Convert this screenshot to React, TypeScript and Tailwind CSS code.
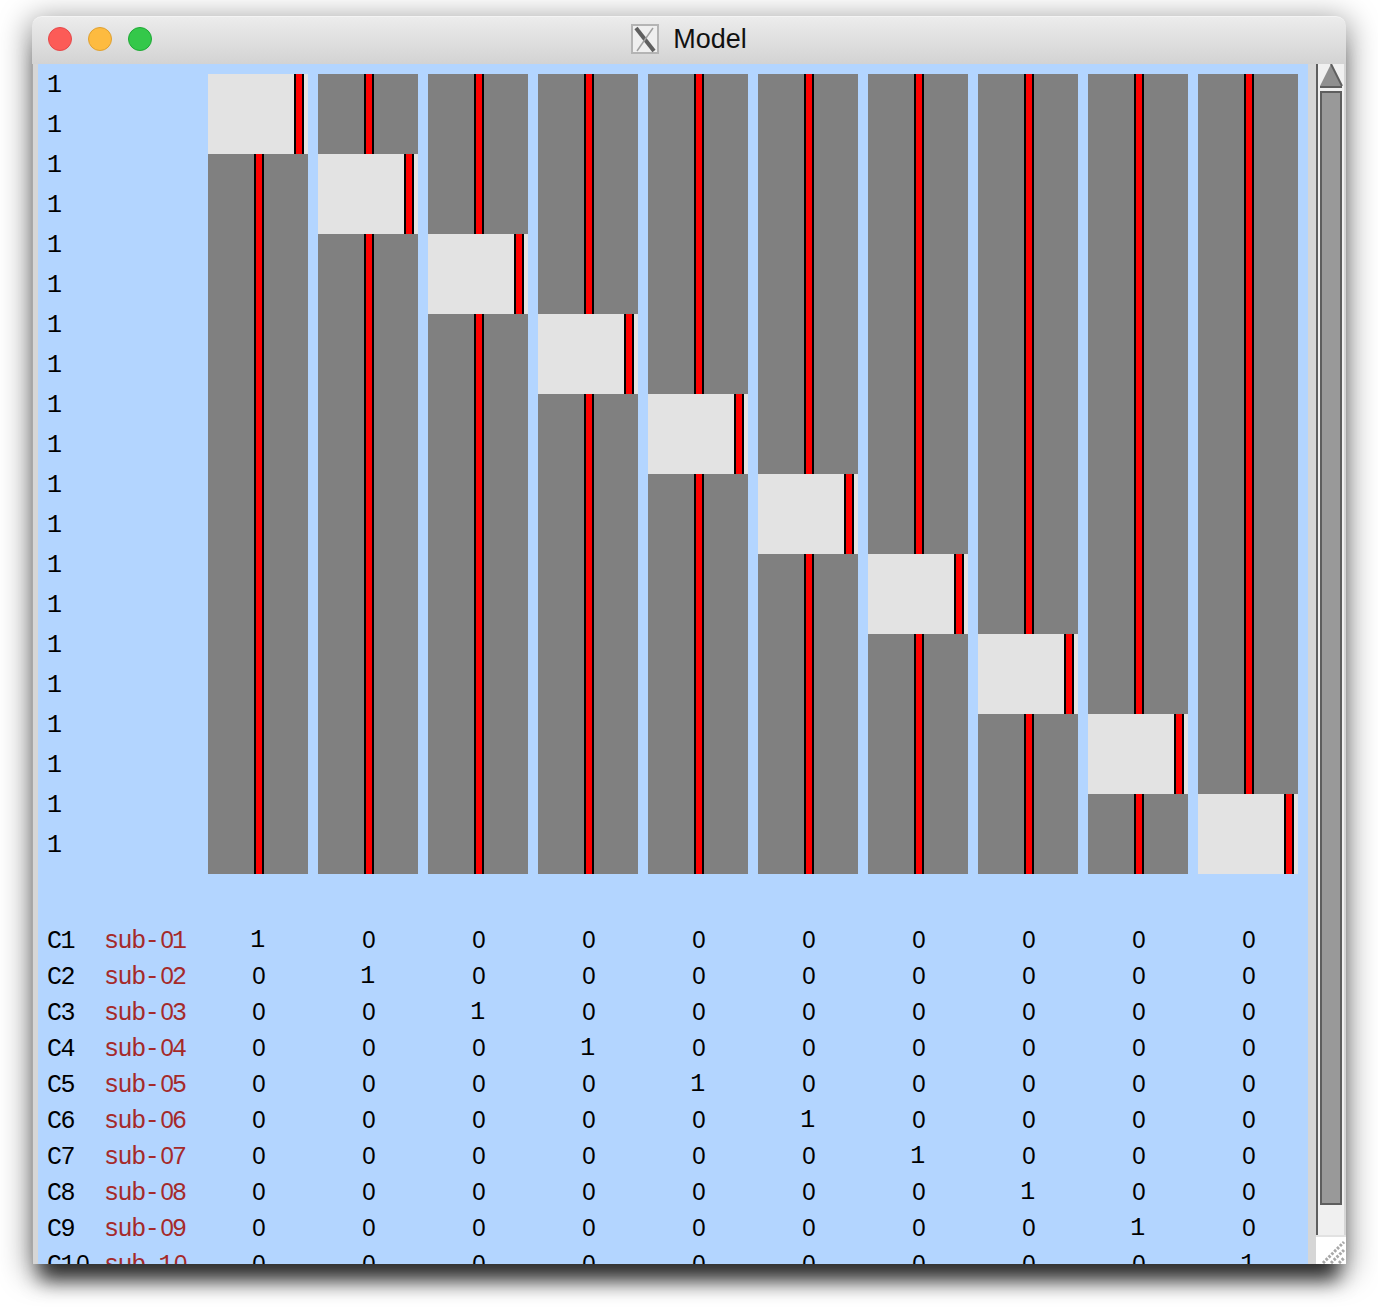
const COLS = Array.from({ length: 10 }, (_, i) => i);
const LEFT_ROWS = Array.from({ length: 20 }, (_, i) => i);

function Bar() {
  return <div className="h-full w-[10px] border-x-2 border-black bg-[#ff0000]" />;
}

function Column({ index }: { index: number }) {
  return (
    <div className="flex h-[800px] w-[100px] flex-col">
      <div className="bg-[#808080] pl-[46px]" style={{ height: index * 80 }}>
        <Bar />
      </div>
      <div className="h-[80px] bg-[#e3e3e3] pl-[86px]">
        <Bar />
      </div>
      <div className="flex-1 bg-[#808080] pl-[46px]">
        <Bar />
      </div>
    </div>
  );
}

// the mono font has a dotted zero, the picture has a plain one
function Zero() {
  return <span className="inline-block w-[13.6px] translate-x-px text-center font-['Liberation_Sans',sans-serif] text-[24px] tracking-normal">0</span>;
}

function Digits({ value }: { value: string }) {
  return (
    <>
      {value.split("").map((ch, i) =>
        ch === "0" ? (
          <Zero key={i} />
        ) : (
          <span key={i} className="inline-block w-[13.6px] -translate-x-px text-center">
            {ch}
          </span>
        ),
      )}
    </>
  );
}

function XIcon() {
  return (
    <svg width="28" height="30" viewBox="0 0 28 30">
      <rect x="1" y="1" width="26" height="28" fill="#efefef" stroke="#b4b4b4" strokeWidth="2" />
      <path d="M5 4 L23 27" stroke="#5f5f5f" strokeWidth="4" />
      <path d="M22 4 L6 27" stroke="#a0a0a0" strokeWidth="1.5" />
    </svg>
  );
}

function TitleBar() {
  return (
    <div className="relative flex h-[48px] items-center justify-center rounded-t-[10px] border-t border-[#f4f4f4] bg-gradient-to-b from-[#ececec] to-[#d3d3d3]">
      <div className="absolute left-[16px] top-[10px] flex gap-[16px]">
        <div className="h-[24px] w-[24px] rounded-full border border-[#e5484a] bg-[#fc5b57]" />
        <div className="h-[24px] w-[24px] rounded-full border border-[#dfa030] bg-[#fdbb40]" />
        <div className="h-[24px] w-[24px] rounded-full border border-[#1ea935] bg-[#34c84a]" />
      </div>
      <div className="-mt-[3px] flex items-center gap-[14px]">
        <XIcon />
        <span className="font-['Liberation_Sans',sans-serif] text-[27px] leading-none text-[#111]">Model</span>
      </div>
    </div>
  );
}

function Scrollbar() {
  return (
    <div className="-mt-[2px] flex w-[30px] flex-col">
      <div className="h-[28px] w-[28px] border-l-2 border-t-2 border-[#5e5e5e] bg-[#f0f0f0]">
        <svg width="26" height="26" viewBox="0 0 26 26" className="block">
          <path d="M13 0 L24 22 L2 22 Z" fill="#8f8f8f" />
          <path d="M13 0 L24 22" stroke="#5e5e5e" strokeWidth="2" fill="none" />
          <path d="M2 23 H24" stroke="#5e5e5e" strokeWidth="2" />
        </svg>
      </div>
      <div className="flex h-[1145px] w-[28px] flex-col border-l-2 border-[#5e5e5e] bg-[#f0f0f0]">
        <div className="ml-[2px] mt-[1px] h-[1114px] w-[22px] border-2 border-[#5e5e5e] bg-[#999999]" />
      </div>
      <div className="flex-1 border-t-2 border-[#e2e2e2] bg-white pl-[1px]">
        <svg width="29" height="27" viewBox="0 0 29 27" className="block">
          <path d="M6 26 L27 5 M14 26 L27 13 M22 26 L27 21" stroke="#a8a8a8" strokeWidth="3" strokeDasharray="2.5 1.5" fill="none" />
        </svg>
      </div>
    </div>
  );
}

export default function App() {
  return (
    <div className="h-[1312px] w-[1378px] overflow-hidden bg-white pl-[32px] pt-[16px]">
      <div className="flex h-[1248px] w-[1314px] flex-col rounded-t-[10px] bg-[#d6d6d6] shadow-[0_6px_30px_4px_rgba(0,0,0,0.4),0_24px_20px_-8px_rgba(0,0,0,0.75)]">
        <TitleBar />
        <div className="flex h-[1200px]">
          <div className="w-[6px] border-l border-[#a8a8a8] bg-[#d6d6d6]" />
          <div className="h-full w-[1270px] overflow-hidden bg-[#b3d5ff] font-['Liberation_Mono',monospace] text-[25px] leading-none">
            {/* top plot */}
            <div className="flex">
              <div className="w-[170px] pl-[10px] pt-px">
                {LEFT_ROWS.map((i) => (
                  <div key={i} className="flex h-[40px] items-center text-black">
                    <Digits value="1" />
                  </div>
                ))}
              </div>
              <div className="flex gap-[10px] pt-[10px]">
                {COLS.map((i) => (
                  <Column key={i} index={i} />
                ))}
              </div>
            </div>
            {/* table */}
            <div className="pt-[48px]">
              {COLS.map((r) => (
                <div key={r} className="flex h-[36px] items-center pt-[2px]">
                  <div className="w-[67px] whitespace-nowrap pl-[10px] text-black">
                    <Digits value={`C${r + 1}`} />
                  </div>
                  <div className="w-[103px] whitespace-nowrap text-[#a52a2a]">
                    <Digits value={`sub-${String(r + 1).padStart(2, "0")}`} />
                  </div>
                  <div className="flex gap-[10px]">
                    {COLS.map((c) => (
                      <div key={c} className="w-[100px] text-center text-black">
                        {c === r ? <Digits value="1" /> : <Zero />}
                      </div>
                    ))}
                  </div>
                </div>
              ))}
            </div>
          </div>
          <div className="w-[8px] bg-[#d6d6d6]" />
          <Scrollbar />
        </div>
      </div>
    </div>
  );
}
